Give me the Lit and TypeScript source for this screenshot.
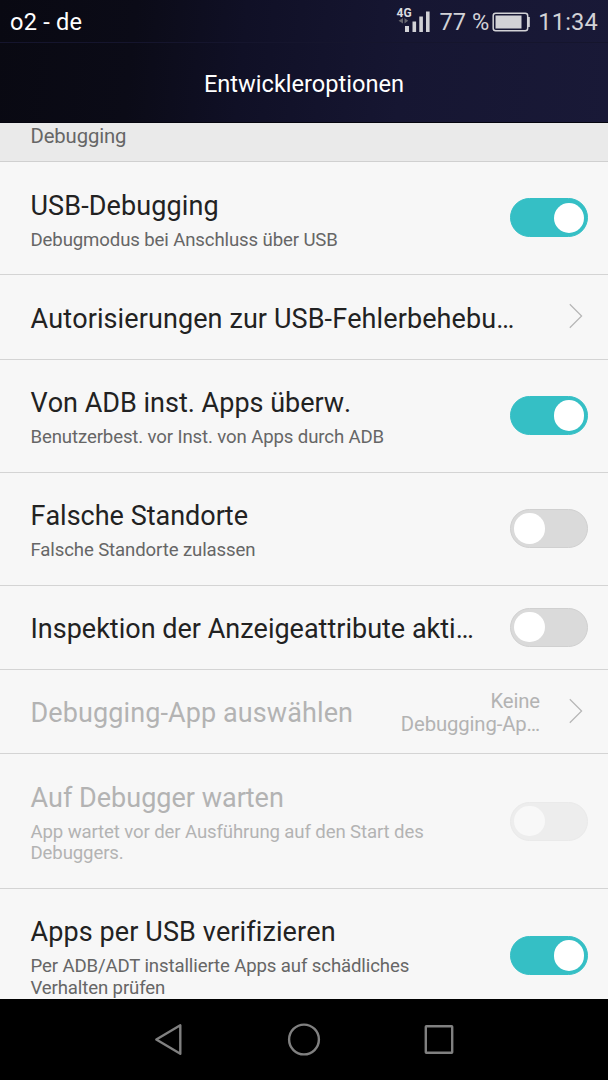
import { LitElement, html, css, svg, nothing } from "lit";
import { customElement, property } from "lit/decorators.js";
import { classMap } from "lit/directives/class-map.js";

interface Row {
  title: string;
  lines?: string[];
  value?: string[];
  control: "switch" | "chevron";
  on?: boolean;
  disabled?: boolean;
  wide?: boolean;
}

const ROWS: Row[] = [
  { title: "USB-Debugging", lines: ["Debugmodus bei Anschluss über USB"], control: "switch", on: true, wide: true },
  { title: "Autorisierungen zur USB-Fehlerbehebu…", control: "chevron", wide: true },
  { title: "Von ADB inst. Apps überw.", lines: ["Benutzerbest. vor Inst. von Apps durch ADB"], control: "switch", on: true },
  { title: "Falsche Standorte", lines: ["Falsche Standorte zulassen"], control: "switch" },
  { title: "Inspektion der Anzeigeattribute akti…", control: "switch" },
  { title: "Debugging-App auswählen", value: ["Keine", "Debugging-Ap…"], control: "chevron", disabled: true, wide: true },
  { title: "Auf Debugger warten", lines: ["App wartet vor der Ausführung auf den Start des", "Debuggers."], control: "switch", disabled: true },
  { title: "Apps per USB verifizieren", lines: ["Per ADB/ADT installierte Apps auf schädliches", "Verhalten prüfen"], control: "switch", on: true, wide: true },
];

@customElement("toggle-switch")
export class ToggleSwitch extends LitElement {
  @property({ type: Boolean }) on = false;
  @property({ type: Boolean }) disabled = false;

  static styles = css`
    :host { display: block; flex: none; margin-bottom: 0.6px; }
    .track {
      box-sizing: border-box; width: 78px; height: 39px; border-radius: 20px;
      padding: 0 3px; display: flex; align-items: center;
      background: #dadada; border: 1px solid #d0d0d0;
    }
    .track.on { background: #35bfc5; border-color: #35bfc5; justify-content: flex-end; }
    .track.disabled { background: #ededed; border-color: #eaeaea; }
    .knob { width: 30.500px; height: 30.500px; border-radius: 50%; background: #fff; }
    .disabled .knob { background: #f8f8f8; }
  `;

  render() {
    return html`<div class=${classMap({ track: true, on: this.on, disabled: this.disabled })}><div class="knob"></div></div>`;
  }
}

@customElement("setting-row")
export class SettingRow extends LitElement {
  @property({ attribute: false }) row!: Row;

  static styles = css`
    :host { display: block; flex: none; }
    .row {
      box-sizing: border-box; display: flex; align-items: center;
      padding: 0 20px 0 30.500px; border-bottom: 1px solid #d4d4d4; color: #222;
    }
    .h0 { height: 84.2px; }
    .h1 { height: 113.2px; }
    .h2 { height: 135px; }
    .text { flex: 1; min-width: 0; padding-top: 4px; }
    .h0 .text { padding-top: 3.2px; }
    .title { font-size: 27px; line-height: 32px; white-space: nowrap; font-variant-ligatures: none; font-kerning: none; }
    .wide .title { letter-spacing: 0.1px; }
    .sub { font-size: 18.6px; line-height: 21.4px; margin-top: 8px; color: #666; white-space: nowrap; letter-spacing: -0.12px; }
    .value { font-size: 20.3px; line-height: 23px; text-align: right; margin-right: 28px; white-space: nowrap; letter-spacing: -0.12px; padding-top: 2px; }
    .disabled, .disabled .sub, .disabled .value { color: #b3b3b3; }
    .chevron { display: block; flex: none; width: 16px; height: 28px; margin: 0 4px 1px 0; }
  `;

  render() {
    const r = this.row;
    const count = r.lines?.length ?? 0;
    return html`
      <div class=${classMap({ row: true, ["h" + count]: true, disabled: !!r.disabled, wide: !!r.wide })}>
        <div class="text">
          <div class="title">${r.title}</div>
          ${r.lines ? html`<div class="sub">${r.lines.map((l) => html`<div>${l}</div>`)}</div>` : nothing}
        </div>
        ${r.value ? html`<div class="value">${r.value.map((l) => html`<div>${l}</div>`)}</div>` : nothing}
        ${r.control === "switch"
          ? html`<toggle-switch ?on=${!!r.on} ?disabled=${!!r.disabled}></toggle-switch>`
          : html`<svg class="chevron" viewBox="0 0 16 28"><path d="M1.8 2.3 13.6 14 1.8 25.7" fill="none" stroke="#b5b5b5" stroke-width="1.2"/></svg>`}
      </div>`;
  }
}

@customElement("app-root")
export class AppRoot extends LitElement {
  static styles = css`
    :host {
      display: flex; flex-direction: column; width: 608px; height: 1080px;
      overflow: hidden; font-family: Roboto, sans-serif; background: #f7f7f7;
    }
    .top {
      box-sizing: border-box; flex: none; height: 123px; color: #fff; border-bottom: 1px solid #05050f;
      background: linear-gradient(96deg, #090912 0%, #0b0b17 22%, #101026 40%, #161632 66%, #191937 100%);
    }
    .status {
      box-sizing: border-box; height: 43px; padding: 0 10px; display: flex; align-items: center;
      font-size: 23.6px; line-height: 43px; border-bottom: 1px solid #15152d;
    }
    .carrier { flex: 1; padding-top: 2px; letter-spacing: 0.2px; }
    .grey { color: #d2d2d6; padding-top: 2px; white-space: nowrap; }
    .time { letter-spacing: 0.2px; }
    .signal { width: 36px; height: 28px; margin-right: 8px; display: block; }
    .net { font: bold 12px Roboto, sans-serif; }
    .battery { width: 39px; height: 20px; margin: 1px 7px 0 3px; display: block; }
    .heading { text-align: center; font-size: 23.6px; line-height: 83px; }
    .list { flex: 1; min-height: 0; overflow: hidden; display: flex; flex-direction: column; }
    .list setting-row:last-of-type { margin-top: -0.6px; }
    .section {
      box-sizing: border-box; flex: none; height: 39.2px; padding-left: 30.500px; background: #eaeaea;
      border-bottom: 1px solid #d0d0d0; color: #666; font-size: 20.3px; line-height: 26px; letter-spacing: -0.12px;
    }
    .nav { flex: none; height: 81px; background: #000; display: flex; justify-content: center; gap: 95px; align-items: center; }
    .nav svg { width: 40px; height: 40px; display: block; fill: none; stroke: #808080; stroke-width: 2.4; stroke-linejoin: round; }
  `;

  render() {
    return html`
      <div class="top">
        <div class="status">
          <div class="carrier">o2 - de</div>
          <svg class="signal" viewBox="0 0 36 28">
            ${svg`<text class="net" x="0.5" y="9.5" fill="#dcdce0">4G</text>
            <path d="M7 11v5.5L2.500 13.700zM8.500 11v5.500l3.700-2.800z" fill="#66666e"/>
            <path d="M9 19h4v6H9zM16.5 14.5h3.6V25h-3.6zM23.3 9.5h3.6V25h-3.6zM30 4.5h3.6V25H30z" fill="#d2d2d6"/>`}
          </svg>
          <div class="grey">77 %</div>
          <svg class="battery" viewBox="0 0 39 20">
            <rect x="1.2" y="1.2" width="34.5" height="17.6" rx="2.5" fill="none" stroke="#d2d2d6" stroke-width="1.5"/>
            <path d="M36 5h1.8v10H36z" fill="#d2d2d6"/>
            <rect x="3.5" y="3.5" width="26" height="13" fill="#d2d2d6"/>
          </svg>
          <div class="grey time">11:34</div>
        </div>
        <div class="heading">Entwickleroptionen</div>
      </div>
      <div class="list">
        <div class="section">Debugging</div>
        ${ROWS.map((row) => html`<setting-row .row=${row}></setting-row>`)}
      </div>
      <div class="nav">
        <svg viewBox="0 0 40 40"><path d="M31.3 5.3v28.400L7.300 19.500z"/></svg>
        <svg viewBox="0 0 40 40"><circle cx="20" cy="19.5" r="14.9"/></svg>
        <svg viewBox="0 0 40 40"><rect x="6.8" y="6.3" width="26.4" height="26.4" rx=".5"/></svg>
      </div>`;
  }
}
